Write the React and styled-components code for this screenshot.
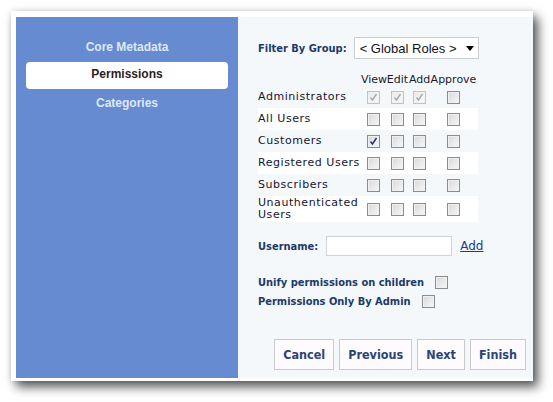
import React from "react";
import styled, { createGlobalStyle } from "styled-components";

const Global = createGlobalStyle`
  html, body { margin: 0; padding: 0; background: #ffffff; }
  body { font-family: "DejaVu Sans", Verdana, sans-serif; }
`;

const Page = styled.div`
  padding: 11px;
  width: 553px;
  height: 402px;
  box-sizing: border-box;
`;

const Window = styled.div`
  width: 522px;
  height: 370px;
  box-sizing: border-box;
  background: #ffffff;
  padding: 6px 0 3px 5px;
  box-shadow: 5px 6px 10px rgba(0, 0, 0, 0.65), 0 0 6px rgba(0, 0, 0, 0.12);
  display: flex;
`;

const Sidebar = styled.nav`
  width: 222px;
  background: #668bd0;
  display: flex;
  flex-direction: column;
  padding: 17px 10px 0;
  box-sizing: border-box;
`;

const NavItem = styled.div`
  height: 27px;
  line-height: ${(p) => (p.$active ? "25px" : "27px")};
  margin: ${(p) => (p.$active ? "1px 0" : "0")};
  text-align: center;
  font-family: "Liberation Sans", Arial, sans-serif;
  font-weight: bold;
  font-size: 12px;
  color: ${(p) => (p.$active ? "#2a1f22" : "#dfe7f5")};
  background: ${(p) => (p.$active ? "#ffffff" : "transparent")};
  border-radius: 4px;
`;

const Content = styled.div`
  flex: 1;
  background: #f5f8fb;
  padding: 20px 7px 8px 20px;
  display: flex;
  flex-direction: column;
`;

const BoldLabel = styled.span`
  font-family: "DejaVu Sans Condensed", "Liberation Sans", sans-serif;
  font-weight: bold;
  font-size: 11px;
  color: #1d3a68;
`;

const Row = styled.div`
  display: flex;
  align-items: center;
  gap: ${(p) => p.$gap || 0}px;
  margin-top: ${(p) => p.$mt || 0}px;
  height: ${(p) => p.$h || "auto"};
`;

const Select = styled.div`
  width: 125px;
  height: 22px;
  box-sizing: border-box;
  border: 1px solid #c9ccd2;
  background: #ffffff;
  display: flex;
  align-items: center;
  justify-content: space-between;
  padding: 0 4px 0 5px;
  font-family: "Liberation Sans", Arial, sans-serif;
  font-size: 13px;
  color: #111;
`;

const Caret = styled.span`
  width: 0;
  height: 0;
  border-left: 4px solid transparent;
  border-right: 4px solid transparent;
  border-top: 5px solid #000;
  margin-top: 1px;
`;

const Table = styled.div`
  margin-top: 13px;
  width: 220px;
  display: flex;
  flex-direction: column;
`;

const TRow = styled.div`
  display: grid;
  grid-template-columns: 103px 25px 23px 21px 47px;
  align-items: center;
  height: ${(p) => p.$h || 22}px;
  background: ${(p) => (p.$alt ? "#ffffff" : "transparent")};
`;

const HeadCell = styled.span`
  font-size: 11px;
  color: #1a1a2e;
  text-align: center;
  white-space: nowrap;
`;

const Label = styled.span`
  font-size: 11px;
  letter-spacing: 0.55px;
  color: #15152e;
  line-height: 12px;
`;

const Cell = styled.span`
  display: flex;
  justify-content: center;
`;

const Box = styled.span`
  width: 13px;
  height: 13px;
  box-sizing: border-box;
  border: 1px solid ${(p) => (p.$disabled ? "#c2c2c2" : "#8c8c8c")};
  background: ${(p) =>
    p.$disabled
      ? "linear-gradient(135deg, #e8e8e8, #fbfbfb)"
      : "linear-gradient(135deg, #d8d8d8, #f8f8f8)"};
  box-shadow: inset 0 0 0 1px ${(p) => (p.$disabled ? "#f2f2f2" : "#f0f0f0")};
  display: inline-flex;
  align-items: center;
  justify-content: center;
  flex: none;
`;

const Check = ({ checked, disabled }) => (
  <Box $disabled={disabled}>
    {checked && (
      <svg width="9" height="9" viewBox="0 0 9 9">
        <path
          d="M1.5 4.5 L3.5 7 L7.5 1"
          fill="none"
          stroke={disabled ? "#a8a8a8" : "#24306e"}
          strokeWidth="1.4"
        />
      </svg>
    )}
  </Box>
);

const Input = styled.div`
  width: 126px;
  height: 20px;
  box-sizing: border-box;
  border: 1px solid #cfd3da;
  background: #ffffff;
`;

const Link = styled.a`
  font-size: 12px;
  color: #1a3c8c;
  text-decoration: underline;
`;

const Buttons = styled.div`
  margin-top: auto;
  display: flex;
  justify-content: flex-end;
  gap: 5px;
`;

const Button = styled.button`
  height: 31px;
  box-sizing: border-box;
  padding: 0 8px;
  border: 1px solid #cbc9cc;
  background: #fdfbfd;
  font-family: "DejaVu Sans Condensed", "Liberation Sans", sans-serif;
  font-weight: bold;
  font-size: 12.5px;
  color: #2c4473;
`;

const roles = [
  { name: "Administrators", vals: [1, 1, 1, 0], disabled: true },
  { name: "All Users", vals: [0, 0, 0, 0], alt: true },
  { name: "Customers", vals: [1, 0, 0, 0] },
  { name: "Registered Users", vals: [0, 0, 0, 0], alt: true },
  { name: "Subscribers", vals: [0, 0, 0, 0] },
  { name: "Unauthenticated Users", vals: [0, 0, 0, 0], alt: true, h: 26 },
];

export default function App() {
  return (
    <>
      <Global />
      <Page>
        <Window>
          <Sidebar>
            <NavItem>Core Metadata</NavItem>
            <NavItem $active>Permissions</NavItem>
            <NavItem>Categories</NavItem>
          </Sidebar>
          <Content>
            <Row $gap={7}>
              <BoldLabel>Filter By Group:</BoldLabel>
              <Select>
                <span>&lt; Global Roles &gt;</span>
                <Caret />
              </Select>
            </Row>
            <Table>
              <TRow $h={14}>
                <span />
                <HeadCell>View</HeadCell>
                <HeadCell>Edit</HeadCell>
                <HeadCell>Add</HeadCell>
                <HeadCell>Approve</HeadCell>
              </TRow>
              {roles.map((r) => (
                <TRow key={r.name} $alt={r.alt} $h={r.h}>
                  <Label>{r.name === "Unauthenticated Users" ? <>Unauthenticated<br />Users</> : r.name}</Label>
                  {r.vals.map((v, i) => (
                    <Cell key={i}>
                      <Check checked={!!v} disabled={r.disabled && i < 3} />
                    </Cell>
                  ))}
                </TRow>
              ))}
            </Table>
            <Row $mt={14} $gap={8}>
              <BoldLabel>Username:</BoldLabel>
              <Input />
              <Link>Add</Link>
            </Row>
            <Row $mt={18} $gap={11} $h="16px">
              <BoldLabel>Unify permissions on children</BoldLabel>
              <Check />
            </Row>
            <Row $mt={3} $gap={11} $h="16px">
              <BoldLabel>Permissions Only By Admin</BoldLabel>
              <Check />
            </Row>
            <Buttons>
              <Button>Cancel</Button>
              <Button>Previous</Button>
              <Button>Next</Button>
              <Button>Finish</Button>
            </Buttons>
          </Content>
        </Window>
      </Page>
    </>
  );
}
